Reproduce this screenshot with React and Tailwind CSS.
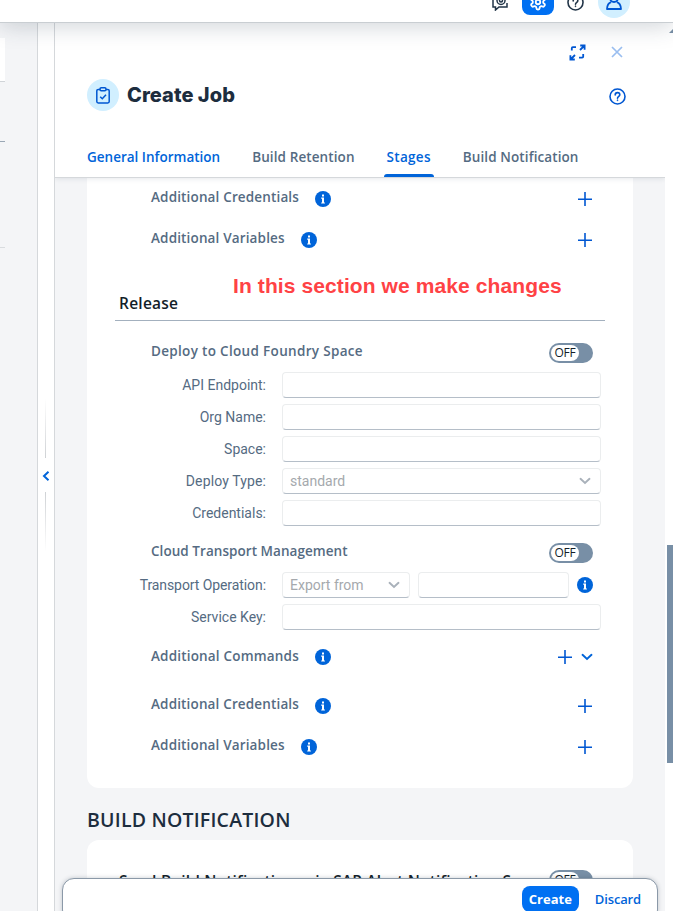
import React from "react";

function InfoIcon() {
  return (
    <svg width="16" height="16" viewBox="0 0 16 16" className="shrink-0">
      <circle cx="8" cy="8" r="8" fill="#0064d9" />
      <rect x="7" y="3.5" width="2" height="2" fill="#fff" />
      <path d="M6.2 6.6H9V11.4H9.9V12.6H6.2V11.4H7V7.8H6.2Z" fill="#fff" />
    </svg>
  );
}

function PlusIcon() {
  return (
    <svg width="14" height="14" viewBox="0 0 14 14" className="mr-px shrink-0">
      <path d="M7 0V14M0 7.25H14" stroke="#0057d2" strokeWidth="1.6" fill="none" />
    </svg>
  );
}

function Chevron({ color = "#a9b1ba" }) {
  return (
    <svg width="12" height="8" viewBox="0 0 12 8" className="shrink-0">
      <path d="M1.5 1.8L6 6L10.5 1.8" stroke={color} strokeWidth="1.9" fill="none" strokeLinecap="round" />
    </svg>
  );
}

function HelpIcon({ color, size = 17 }) {
  return (
    <svg width={size} height={size} viewBox="0 0 17 17" fill="none" stroke={color} strokeWidth="1.6">
      <circle cx="8.5" cy="8.5" r="7.5" />
      <path d="M6.2 6.9C6.2 5.4 7.2 4.6 8.5 4.6S10.8 5.4 10.8 6.7C10.8 8.3 8.5 8.3 8.5 10.2" strokeLinecap="round" />
      <circle cx="8.5" cy="12.2" r="0.5" fill={color} strokeWidth="0.8" />
    </svg>
  );
}

function Toggle() {
  return (
    <div className="h-5 w-11 shrink-0 rounded-full bg-[#788fa6] p-0.5">
      <div className="flex h-4 w-7 items-center justify-center rounded-full bg-white text-[12px] leading-none tracking-[-0.2px] text-[#131e29]">
        OFF
      </div>
    </div>
  );
}

function Input({ className = "w-[319px]", children }) {
  return (
    <div className={"flex h-[26px] items-center justify-between rounded border border-[#ebedee] border-b-[#b5bec8] bg-white px-[7px] font-['Roboto'] text-[14px] text-[#a5a9ad] " + className}>
      {children}
    </div>
  );
}

function Field({ label, track = "", children }) {
  return (
    <div className="flex h-8 items-center">
      <div className={"mr-4 w-[179px] text-right font-['Roboto'] text-[14px] text-[#556b82] " + track}>{label}</div>
      {children}
    </div>
  );
}

function ActionRow({ label, track = "tracking-[0.15px]", height = "h-[41px]", menu }) {
  return (
    <div className={"flex items-center pl-16 pr-10 " + height}>
      <span className={"mt-[-2px] text-[13.5px] font-semibold text-[#556b82] " + track}>{label}</span>
      <span className="ml-4">
        <InfoIcon />
      </span>
      <span className="ml-auto flex items-center gap-2">
        <PlusIcon />
        {menu && <Chevron color="#0064d9" />}
      </span>
    </div>
  );
}

function ShellBar() {
  return (
    <div className="relative z-20 flex h-[22px] shrink-0 items-end justify-end overflow-visible bg-white shadow-[0_1px_0_#c9ced2,0_2px_24px_rgba(34,53,72,0.26)]">
      <svg className="absolute left-[492px] top-[-6px]" width="17" height="17" viewBox="0 0 17 17" fill="none" stroke="#223548" strokeWidth="1.5">
        <path d="M1 1V13H3.5V16L7 13H13M15 9V13H13" />
        <circle cx="9" cy="6.5" r="4" />
        <circle cx="9" cy="6.5" r="1.5" />
      </svg>
      <div className="absolute left-[522px] top-[-17px] flex h-8 w-8 items-end justify-center rounded-lg bg-[#0070f2] pb-[4px]">
        <svg width="18" height="18" viewBox="0 0 24 24" fill="none" stroke="#fff" strokeWidth="2.4" strokeLinejoin="round">
          <path d="M12.22 2h-.44a2 2 0 0 0-2 2v.18a2 2 0 0 1-1 1.73l-.43.25a2 2 0 0 1-2 0l-.15-.08a2 2 0 0 0-2.73.73l-.22.38a2 2 0 0 0 .73 2.73l.15.1a2 2 0 0 1 1 1.72v.51a2 2 0 0 1-1 1.74l-.15.09a2 2 0 0 0-.73 2.73l.22.38a2 2 0 0 0 2.73.73l.15-.08a2 2 0 0 1 2 0l.43.25a2 2 0 0 1 1 1.73V20a2 2 0 0 0 2 2h.44a2 2 0 0 0 2-2v-.18a2 2 0 0 1 1-1.73l.43-.25a2 2 0 0 1 2 0l.15.08a2 2 0 0 0 2.73-.73l.22-.39a2 2 0 0 0-.73-2.73l-.15-.08a2 2 0 0 1-1-1.74v-.5a2 2 0 0 1 1-1.74l.15-.09a2 2 0 0 0 .73-2.73l-.22-.38a2 2 0 0 0-2.73-.73l-.15.08a2 2 0 0 1-2 0l-.43-.25a2 2 0 0 1-1-1.73V4a2 2 0 0 0-2-2z" />
          <circle cx="12" cy="12" r="3" />
        </svg>
      </div>
      <div className="absolute left-[567px] top-[-6px]">
        <HelpIcon color="#223548" />
      </div>
      <div className="absolute left-[598px] top-[-14px] flex h-8 w-8 items-end justify-center rounded-full bg-[#d1efff] pb-2">
        <svg width="16" height="17" viewBox="0 0 16 17" fill="none" stroke="#0057d2" strokeWidth="1.8" strokeLinejoin="round">
          <circle cx="8" cy="5" r="4" />
          <path d="M5.2 9.2C2.6 10 1.2 12.2 1 16H15C14.8 12.2 13.4 10 10.8 9.2" />
        </svg>
      </div>
    </div>
  );
}

function PageHeader() {
  return (
    <div className="relative z-10 flex h-[156px] shrink-0 flex-col border-b border-[#d5d8db] bg-white pl-8 shadow-[0_1px_5px_rgba(34,53,72,0.1)]">
      <div className="flex h-[57px] items-center justify-end gap-[25px] pr-[42px] pt-[3px]">
        <svg width="17" height="17" viewBox="0 0 17 17" fill="none" stroke="#0057d2" strokeWidth="1.8">
          <path d="M2.8 6.5V4.2Q2.8 3.2 3.8 3.2H7M14.2 10V12.6Q14.2 13.6 13.2 13.6H10M11 6L15 2M11.2 1.5H15.6V5.8M6 11L2 15M1.4 11.2V15.5H5.8" />
        </svg>
        <svg width="12" height="12" viewBox="0 0 12 12" fill="none" stroke="#9abef0" strokeWidth="1.7">
          <path d="M1 1L11 11M11 1L1 11" />
        </svg>
      </div>
      <div className="flex h-8 items-center pr-10">
        <div className="flex h-8 w-8 items-center justify-center rounded-full bg-[#d1efff]">
          <svg width="14" height="17" viewBox="0 0 14 17" fill="none" stroke="#0057d2" strokeWidth="1.5">
            <rect x="0.8" y="2.4" width="12.4" height="13.6" rx="1.4" />
            <rect x="4" y="0.8" width="6" height="3" rx="1.2" fill="#d1efff" />
            <path d="M4.2 9.8L6.3 11.8L10 7.8" />
          </svg>
        </div>
        <h1 className="ml-2 font-['Inter'] text-[20px] font-extrabold tracking-[0.05px] text-[#1d2d3e]">Create Job</h1>
        <span className="ml-auto mr-[-1px] mt-[2px]">
          <HelpIcon color="#0057d2" />
        </span>
      </div>
      <nav className="mt-auto flex h-10 gap-8 text-[13.5px] font-semibold leading-[40px] text-[#556b82]">
        <span className="text-[#0064d9]">General Information</span>
        <span className="tracking-[0.1px]">Build Retention</span>
        <span className="relative tracking-[0.3px] text-[#0064d9]">
          Stages
          <span className="absolute -left-[3px] -right-[3px] bottom-0 h-[3px] rounded-t bg-[#0064d9]" />
        </span>
        <span className="tracking-[0.1px]">Build Notification</span>
      </nav>
    </div>
  );
}

export default function App() {
  return (
    <div className="relative flex h-[911px] w-[673px] flex-col overflow-hidden bg-white font-['Open_Sans',sans-serif]">
      <ShellBar />
      <div className="flex min-h-0 flex-1">
        <aside className="w-[38px] shrink-0 border-r border-[#d5d8db] bg-[#f4f5f7] pt-4">
          <div className="h-[44px] w-[5px] border-b border-[#d0d4d8] bg-white" />
          <div className="mt-[59px] h-px w-[5px] bg-[#9aa7b5]" />
          <div className="mt-[105px] h-px w-[5px] bg-[#d9dcdf]" />
        </aside>
        <div className="flex w-[17px] shrink-0 flex-col items-center border-r border-[#d5d8db] pr-px pt-[376px]">
          <div className="h-[60px] w-px bg-linear-to-t from-[#cfd2d5] to-white" />
          <div className="flex h-[34px] items-center pt-px">
            <svg width="8" height="10" viewBox="0 0 8 10" fill="none" stroke="#0064d9" strokeWidth="2">
              <path d="M6.5 0.8L2 5L6.5 9.2" />
            </svg>
          </div>
          <div className="h-[60px] w-px bg-linear-to-b from-[#cfd2d5] to-white" />
        </div>
        <main className="relative flex w-[610px] shrink-0 flex-col overflow-hidden bg-[#f4f5f7]">
          <PageHeader />
          <section className="mx-8 h-[610px] shrink-0 rounded-b-xl bg-white">
            <ActionRow label="Additional Credentials" />
            <ActionRow label="Additional Variables" />
            <div className="relative mx-7 flex h-[61px] items-end border-b border-[#a3b0be] pb-[6px] pl-1">
              <h2 className="text-[15.5px] font-semibold leading-[22px] tracking-[0.25px] text-[#131e29]">Release</h2>
              <span className="absolute left-[118px] top-[14px] whitespace-nowrap font-['Liberation_Sans'] text-[21px] font-bold leading-6 tracking-[0.1px] text-[#ff4245]">
                In this section we make changes
              </span>
            </div>
            <div className="mt-4 flex h-8 items-center justify-between pl-16 pr-10">
              <span className="mt-[-3px] text-[13.5px] font-semibold tracking-[0.32px] text-[#556b82]">Deploy to Cloud Foundry Space</span>
              <Toggle />
            </div>
            <Field label="API Endpoint:"><Input /></Field>
            <Field label="Org Name:"><Input /></Field>
            <Field label="Space:"><Input /></Field>
            <Field label="Deploy Type:" track="tracking-[0.12px]">
              <Input>
                <span>standard</span>
                <span className="mr-[2px]"><Chevron /></span>
              </Input>
            </Field>
            <Field label="Credentials:"><Input /></Field>
            <div className="mt-2 flex h-8 items-center justify-between pl-16 pr-10">
              <span className="mt-[-3px] text-[13.5px] font-semibold tracking-[0.05px] text-[#556b82]">Cloud Transport Management</span>
              <Toggle />
            </div>
            <Field label="Transport Operation:" track="tracking-[-0.08px]">
              <Input className="w-32">
                <span>Export from</span>
                <span className="mr-[2px]"><Chevron /></span>
              </Input>
              <Input className="ml-2 w-[151px]" />
              <span className="ml-2"><InfoIcon /></span>
            </Field>
            <Field label="Service Key:"><Input /></Field>
            <div className="h-1" />
            <ActionRow label="Additional Commands" track="tracking-[0.18px]" height="h-10" menu />
            <div className="h-2" />
            <ActionRow label="Additional Credentials" />
            <ActionRow label="Additional Variables" />
          </section>
          <h2 className="flex h-[52px] shrink-0 items-end pb-[6px] pl-8 text-[19.5px] font-semibold tracking-[0.2px] text-[#1d2d3e]">BUILD NOTIFICATION</h2>
          <section className="mx-8 flex h-24 shrink-0 items-start justify-between rounded-t-xl bg-white pl-8 pr-10 pt-[30px]">
            <span className="whitespace-nowrap text-[15.5px] font-semibold leading-[22px] tracking-[0.18px] text-[#131e29]">Send Build Notifications via SAP Alert Notification S</span>
            <Toggle />
          </section>
        </main>
        <div className="flex flex-1 flex-col items-end bg-white">
          <svg width="4" height="4" viewBox="0 0 4 4" className="mt-[7px]">
            <path d="M0 4L4 0V4Z" fill="#788fa6" />
          </svg>
          <div className="mt-[512px] h-[218px] w-[6px] bg-[#788fa6]" />
        </div>
      </div>
      <footer className="absolute left-[62px] top-[878px] z-10 flex h-11 w-[596px] items-start justify-end rounded-xl border border-[#8b99a8] bg-white pr-4 pt-[7px] text-[13px] shadow-[0_0_4px_rgba(34,53,72,0.25)]">
        <span className="flex h-[26px] w-[57px] items-center justify-center rounded-lg bg-[#0070f2] pt-px font-bold text-white">Create</span>
        <span className="ml-4 flex h-[26px] items-center pt-px font-semibold tracking-[-0.15px] text-[#0064d9]">Discard</span>
      </footer>
    </div>
  );
}
